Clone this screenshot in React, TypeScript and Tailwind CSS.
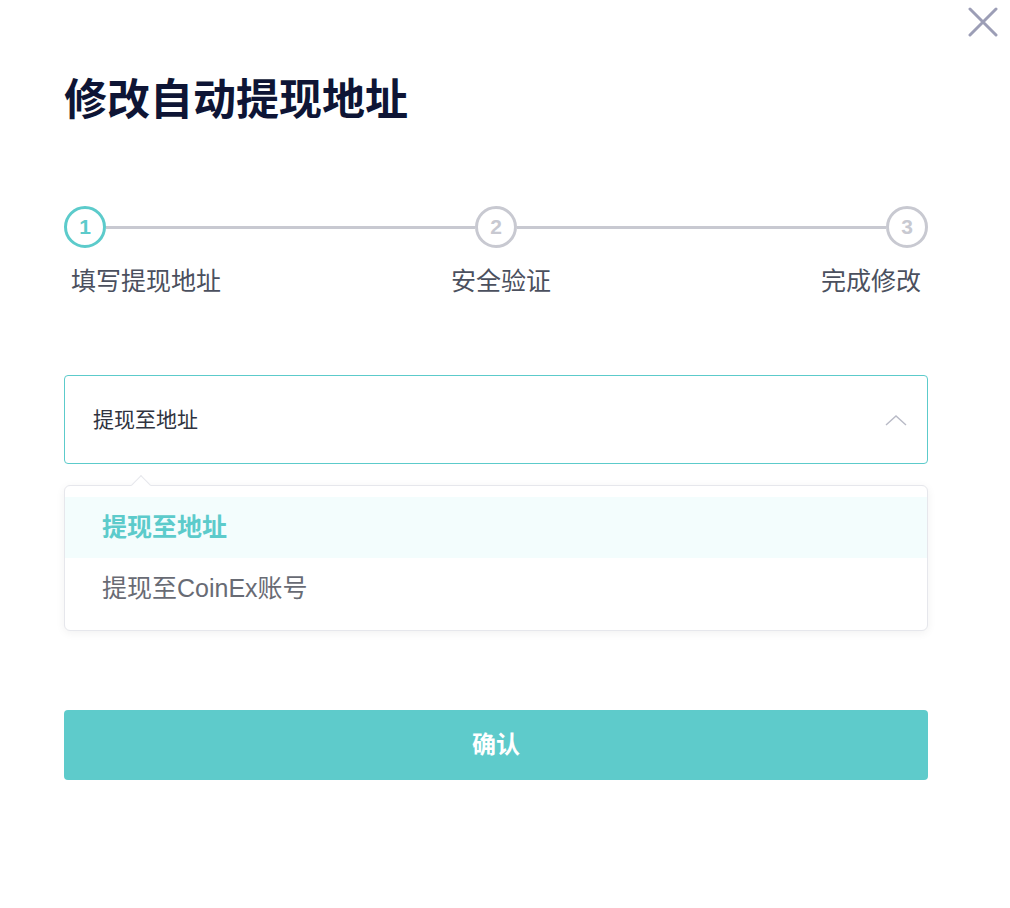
import { useState } from "react";

const steps = [
  { n: 1, label: "填写提现地址" },
  { n: 2, label: "安全验证" },
  { n: 3, label: "完成修改" },
];

function StepCircle({ n, active }: { n: number; active: boolean }) {
  return (
    <div
      className={
        "flex h-[42px] w-[42px] shrink-0 items-center justify-center rounded-full border-[3px] text-[21px] font-bold " +
        (active
          ? "border-[#5ccbcb] text-[#5ccbcb]"
          : "border-[#c8c9d1] text-[#c8c9d1]")
      }
    >
      {n}
    </div>
  );
}

export default function App() {
  const [selected, setSelected] = useState(0);
  const options = ["提现至地址", "提现至CoinEx账号"];

  return (
    <div
      className="relative h-[908px] w-[1010px] bg-white"
      style={{ fontFamily: '"Liberation Sans", "Noto Sans CJK SC", sans-serif' }}
    >
      {/* close */}
      <button className="absolute right-[12px] top-[7px] h-[30px] w-[30px]">
        <svg viewBox="0 0 30 30" className="h-full w-full">
          <path
            d="M2 2 L28 28 M28 2 L2 28"
            stroke="#9c9eb6"
            strokeWidth="3"
            strokeLinecap="round"
          />
        </svg>
      </button>

      <div className="ml-[64px] w-[864px] pt-[70px]">
        <h1 className="h-[60px] text-[43px] font-bold leading-[60px] text-[#0e1535]">
          修改自动提现地址
        </h1>

        {/* steps */}
        <div className="mt-[76px] flex items-center">
          <StepCircle n={1} active />
          <div className="h-[3px] flex-1 bg-[#c8c9d1]" />
          <StepCircle n={2} active={false} />
          <div className="h-[3px] flex-1 bg-[#c8c9d1]" />
          <StepCircle n={3} active={false} />
        </div>
        <div className="mt-[18px] grid grid-cols-3 text-[25px] leading-[30px] text-[#4b505e]">
          <div className="pl-[7px]">{steps[0].label}</div>
          <div className="pl-[10px] text-center">{steps[1].label}</div>
          <div className="pr-[7px] text-right">{steps[2].label}</div>
        </div>

        {/* select */}
        <div className="mt-[79px] flex h-[89px] items-center justify-between rounded-[4px] border border-[#5ccbcb] pl-[28px] pr-[20px]">
          <span className="text-[21px] text-[#2f3340]">{options[selected]}</span>
          <svg width="22" height="12" viewBox="0 0 22 12">
            <path d="M1 11 L11 2 L21 11" fill="none" stroke="#b8bac6" strokeWidth="1.4" />
          </svg>
        </div>

        {/* dropdown */}
        <div className="relative mt-[21px] rounded-[6px] border border-[#e6e7ec] bg-white py-[11px] shadow-[0_2px_10px_rgba(0,0,0,0.06)]">
          <div className="absolute left-[69px] top-[-8px] h-[14px] w-[14px] rotate-45 border-l border-t border-[#e6e7ec] bg-white" />
          {options.map((o, i) => (
            <div
              key={o}
              onClick={() => setSelected(i)}
              className={
                "relative flex h-[61px] cursor-pointer items-center pl-[37px] text-[25px] " +
                (i === selected
                  ? "bg-[#f3fdfd] font-bold text-[#5ccbcb]"
                  : "text-[#686b74]")
              }
            >
              {o}
            </div>
          ))}
        </div>

        <button className="mt-[79px] flex h-[70px] w-full items-center justify-center rounded-[4px] bg-[#5ecbcb] text-[24px] font-bold text-white">
          确认
        </button>
      </div>
    </div>
  );
}
